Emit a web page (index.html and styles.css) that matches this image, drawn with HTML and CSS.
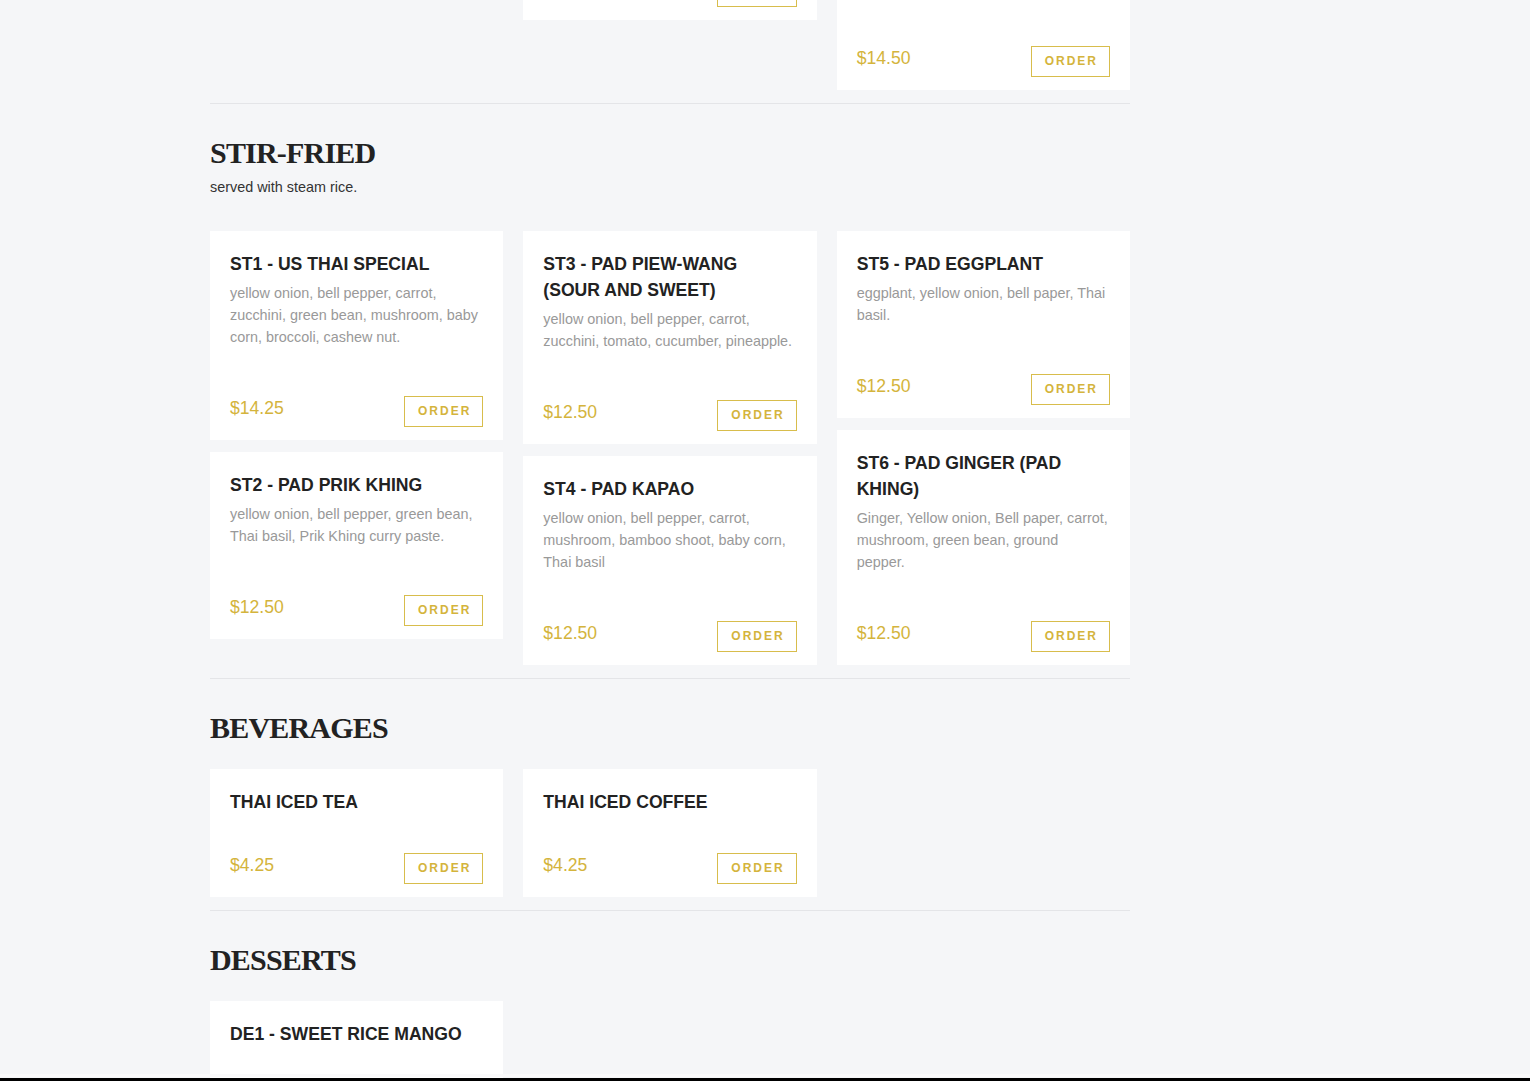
FILE: index.html
```html
<!DOCTYPE html>
<html lang="en">
<head>
    <meta charset="UTF-8">
    <meta name="viewport" content="width=device-width, initial-scale=1.0">
    <title>US Thai - Menu</title>
    <link rel="stylesheet" href="styles.css">
</head>
<body>

    <div class="page">
        <main class="menu">

            <!-- Curry -->
            <section class="menu-section first">
                <div class="section-head">
                    <h2>Curry</h2>
                </div>
                <div class="menu-grid">
                    <div class="menu-col">
                        <div class="item">
                            <h3 class="item-name">CU1 - Red Curry</h3>
                            <p class="item-desc">bamboo shoot, bell pepper, zucchini,<br>Thai basil.</p>
                            <div class="item-foot"><span class="price">$13.50</span><button class="order">Order</button></div>
                        </div>
                        <div class="item">
                            <h3 class="item-name">CU2 - Green Curry</h3>
                            <p class="item-desc">bamboo shoot, bell pepper, eggplant,<br>Thai basil.</p>
                            <div class="item-foot"><span class="price">$13.50</span><button class="order">Order</button></div>
                        </div>
                    </div>
                    <div class="menu-col">
                        <div class="item">
                            <h3 class="item-name">CU3 - Yellow Curry</h3>
                            <p class="item-desc">potato, carrot, yellow onion,<br>coconut milk, yellow curry paste,<br>fried shallot.</p>
                            <div class="item-foot"><span class="price">$13.50</span><button class="order">Order</button></div>
                        </div>
                        <div class="item">
                            <h3 class="item-name">CU4 - Massaman Curry</h3>
                            <p class="item-desc">potato, yellow onion, peanut,<br>coconut milk.</p>
                            <div class="item-foot"><span class="price">$13.50</span><button class="order">Order</button></div>
                        </div>
                    </div>
                    <div class="menu-col">
                        <div class="item">
                            <h3 class="item-name">CU5 - Panang Curry</h3>
                            <p class="item-desc">bell pepper, zucchini, green bean,<br>kaffir lime leaf, coconut milk,<br>Thai basil.</p>
                            <div class="item-foot"><span class="price">$13.50</span><button class="order">Order</button></div>
                        </div>
                        <div class="item">
                            <h3 class="item-name">CU6 - Pineapple Curry<br>(Duck)</h3>
                            <p class="item-desc">roasted duck, pineapple, tomato,<br>bell pepper, grape, red curry paste,<br>coconut milk, Thai basil,<br>kaffir lime leaf.</p>
                            <div class="item-foot"><span class="price">$14.50</span><button class="order">Order</button></div>
                        </div>
                    </div>
                </div>
            </section>

            <!-- Stir-fried -->
            <section class="menu-section">
                <div class="section-head">
                    <h2>Stir-fried</h2>
                    <p class="section-note">served with steam rice.</p>
                </div>
                <div class="menu-grid">
                    <div class="menu-col">
                        <div class="item">
                            <h3 class="item-name">ST1 - US Thai Special</h3>
                            <p class="item-desc">yellow onion, bell pepper, carrot, zucchini, green bean, mushroom, baby corn, broccoli, cashew nut.</p>
                            <div class="item-foot"><span class="price">$14.25</span><button class="order">Order</button></div>
                        </div>
                        <div class="item">
                            <h3 class="item-name">ST2 - Pad Prik Khing</h3>
                            <p class="item-desc">yellow onion, bell pepper, green bean, Thai basil, Prik Khing curry paste.</p>
                            <div class="item-foot"><span class="price">$12.50</span><button class="order">Order</button></div>
                        </div>
                    </div>
                    <div class="menu-col">
                        <div class="item">
                            <h3 class="item-name">ST3 - Pad Piew-Wang (Sour and Sweet)</h3>
                            <p class="item-desc">yellow onion, bell pepper, carrot, zucchini, tomato, cucumber, pineapple.</p>
                            <div class="item-foot"><span class="price">$12.50</span><button class="order">Order</button></div>
                        </div>
                        <div class="item">
                            <h3 class="item-name">ST4 - Pad Kapao</h3>
                            <p class="item-desc">yellow onion, bell pepper, carrot, mushroom, bamboo shoot, baby corn, Thai basil</p>
                            <div class="item-foot"><span class="price">$12.50</span><button class="order">Order</button></div>
                        </div>
                    </div>
                    <div class="menu-col">
                        <div class="item">
                            <h3 class="item-name">ST5 - Pad Eggplant</h3>
                            <p class="item-desc">eggplant, yellow onion, bell paper, Thai basil.</p>
                            <div class="item-foot"><span class="price">$12.50</span><button class="order">Order</button></div>
                        </div>
                        <div class="item">
                            <h3 class="item-name">ST6 - Pad Ginger (Pad Khing)</h3>
                            <p class="item-desc">Ginger, Yellow onion, Bell paper, carrot, mushroom, green bean, ground pepper.</p>
                            <div class="item-foot"><span class="price">$12.50</span><button class="order">Order</button></div>
                        </div>
                    </div>
                </div>
            </section>

            <!-- Beverages -->
            <section class="menu-section">
                <div class="section-head">
                    <h2>Beverages</h2>
                </div>
                <div class="menu-grid">
                    <div class="menu-col">
                        <div class="item">
                            <h3 class="item-name">Thai Iced Tea</h3>
                            <div class="item-foot"><span class="price">$4.25</span><button class="order">Order</button></div>
                        </div>
                    </div>
                    <div class="menu-col">
                        <div class="item">
                            <h3 class="item-name">Thai Iced Coffee</h3>
                            <div class="item-foot"><span class="price">$4.25</span><button class="order">Order</button></div>
                        </div>
                    </div>
                    <div class="menu-col"></div>
                </div>
            </section>

            <!-- Desserts -->
            <section class="menu-section">
                <div class="section-head">
                    <h2>Desserts</h2>
                </div>
                <div class="menu-grid">
                    <div class="menu-col">
                        <div class="item">
                            <h3 class="item-name">DE1 - Sweet Rice Mango</h3>
                            <div class="item-foot"><span class="price">$7.50</span><button class="order">Order</button></div>
                        </div>
                    </div>
                    <div class="menu-col"></div>
                    <div class="menu-col"></div>
                </div>
            </section>

        </main>
        <aside class="side"></aside>
    </div>

    <div class="bottom-bar"></div>

</body>
</html>
```

FILE: styles.css
```css
body {
    margin: 0;
    font-family: "Liberation Sans", Arial, sans-serif;
    background-color: #f5f6f8;
    color: #222;
}

.page {
    max-width: 1110px;
    margin: 0 auto;
    display: flex;
}

.menu {
    width: 920px;
    margin-top: -478px; /* page is shown scrolled to the stir-fried section */
}

.side {
    flex: 1;
}

.menu-section {
    border-top: 1px solid #e4e5e8;
    padding: 31px 0 13px;
}

.menu-section.first {
    border-top: none;
}

.section-head {
    display: flow-root;
    margin-bottom: 23px;
}

.section-head h2 {
    margin: 0;
    font-family: "Liberation Serif", "Times New Roman", serif;
    font-size: 30px;
    line-height: 36px;
    font-weight: bold;
    letter-spacing: -0.8px;
    text-transform: uppercase;
    color: #222;
}

.section-note {
    margin: 5px 0 10px;
    font-size: 14.4px;
    line-height: 22px;
    color: #333;
}

.menu-grid {
    display: grid;
    grid-template-columns: repeat(3, 1fr);
    gap: 20px;
    align-items: start;
}

.menu-col {
    display: flex;
    flex-direction: column;
    gap: 12px;
}

.item {
    display: flex;
    flex-direction: column;
    background-color: #fff;
    padding: 20px 20px 13px;
}

.item-name {
    margin: 0;
    font-size: 17.6px;
    line-height: 26px;
    font-weight: bold;
    text-transform: uppercase;
    color: #222;
}

.item-desc {
    margin: 5px 0 10px;
    font-size: 14.4px;
    line-height: 22px;
    color: #999;
}

.item-foot {
    display: flex;
    justify-content: space-between;
    align-items: flex-start;
    margin-top: 38px;
}

.price {
    font-size: 17.6px;
    line-height: 24px;
    color: #d4b43c;
}

.order {
    font-family: "Liberation Sans", Arial, sans-serif;
    background: none;
    border: 1px solid #d8bd4c;
    color: #d4b43c;
    padding: 8px 11px 8px 13px;
    font-size: 12px;
    line-height: 13px;
    font-weight: bold;
    letter-spacing: 2px;
    text-transform: uppercase;
    cursor: pointer;
}

.bottom-bar {
    position: fixed;
    left: 0;
    right: 0;
    bottom: 0;
    height: 3px;
    background-color: #000;
    box-shadow: 0 -4px 0 #fafafb;
}
```
